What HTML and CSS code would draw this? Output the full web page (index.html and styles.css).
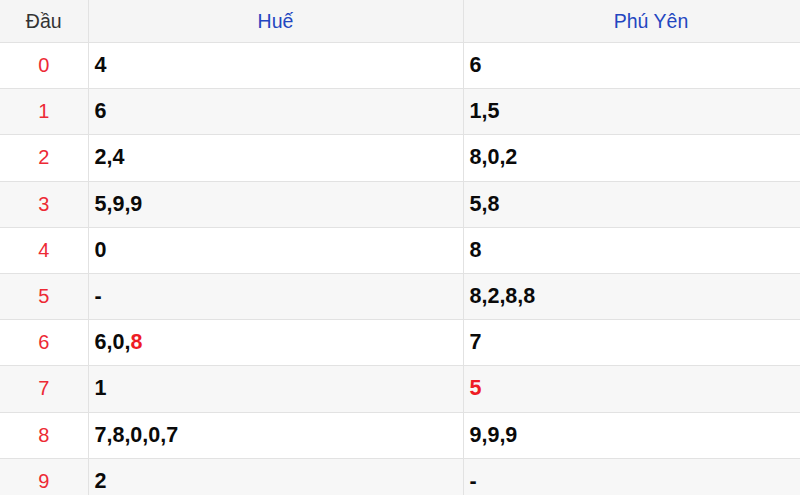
FILE: index.html
```html
<!DOCTYPE html>
<html lang="vi">
<head>
<meta charset="utf-8">
<title>Lô tô đầu</title>
<link rel="stylesheet" href="styles.css">
</head>
<body>
<table class="loto">
  <colgroup>
    <col class="c-head">
    <col class="c-prov1">
    <col class="c-prov2">
  </colgroup>
  <thead>
    <tr>
      <th class="h-dau">Đầu</th>
      <th class="h-prov">Huế</th>
      <th class="h-prov">Phú Yên</th>
    </tr>
  </thead>
  <tbody>
    <tr><td class="dau">0</td><td class="num">4</td><td class="num">6</td></tr>
    <tr><td class="dau">1</td><td class="num">6</td><td class="num">1,5</td></tr>
    <tr><td class="dau">2</td><td class="num">2,4</td><td class="num">8,0,2</td></tr>
    <tr><td class="dau">3</td><td class="num">5,9,9</td><td class="num">5,8</td></tr>
    <tr><td class="dau">4</td><td class="num">0</td><td class="num">8</td></tr>
    <tr><td class="dau">5</td><td class="num">-</td><td class="num">8,2,8,8</td></tr>
    <tr><td class="dau">6</td><td class="num">6,0,<span class="hl">8</span></td><td class="num">7</td></tr>
    <tr><td class="dau">7</td><td class="num">1</td><td class="num"><span class="hl">5</span></td></tr>
    <tr><td class="dau">8</td><td class="num">7,8,0,0,7</td><td class="num">9,9,9</td></tr>
    <tr><td class="dau">9</td><td class="num">2</td><td class="num">-</td></tr>
  </tbody>
</table>
</body>
</html>
```
FILE: styles.css
```css
html, body {
  margin: 0;
  padding: 0;
  background: #ffffff;
  overflow: hidden;
}

body {
  font-family: "Liberation Sans", Arial, sans-serif;
}

.loto {
  border-collapse: collapse;
  table-layout: fixed;
  width: 839px;
}

.c-head { width: 88px; }
.c-prov1 { width: 375px; }
.c-prov2 { width: 376px; }

.loto th,
.loto td {
  border: 1px solid #e2e2e2;
  padding: 0 6px;
}

.loto tr > :first-child {
  border-left: none;
}

.loto thead tr {
  background: #f5f5f5;
}

.loto th {
  height: 42px;
  font-weight: normal;
  font-size: 19.5px;
  text-align: center;
  border-top: none;
}

.h-dau {
  color: #333333;
}

.h-prov {
  color: #2346c0;
}

.loto td {
  height: 45.2px;
}

.loto tbody tr:nth-child(even) {
  background: #f7f7f7;
}

.dau {
  text-align: center;
  color: #ed2a35;
  font-size: 20px;
}

.num {
  font-weight: bold;
  font-size: 21.5px;
  color: #0a0a0a;
}

.hl {
  color: #ee1c25;
}
```
